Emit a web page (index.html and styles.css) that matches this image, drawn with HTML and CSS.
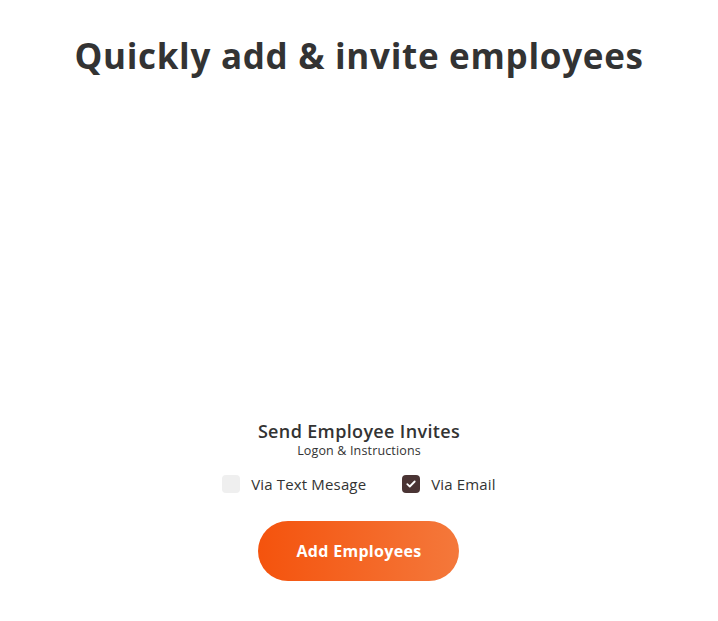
FILE: index.html
```html
<!DOCTYPE html>
<html>
<head>
<meta charset="utf-8">
<link rel="stylesheet" href="styles.css">
</head>
<body>
<main class="page">
  <h1 class="title">Quickly add &amp; invite employees</h1>
  <div class="spacer"></div>
  <section class="invites">
    <h2 class="invites-title">Send Employee Invites</h2>
    <p class="invites-sub">Logon &amp; Instructions</p>
    <div class="options">
      <label class="option">
        <span class="box"></span>
        <span class="option-label">Via Text Mesage</span>
      </label>
      <label class="option">
        <span class="box checked">
          <svg width="10" height="8" viewBox="0 0 10 8"><path d="M1.3 4.2 L3.8 6.5 L8.7 1.5" fill="none" stroke="#fff" stroke-width="1.8" stroke-linecap="round" stroke-linejoin="round"/></svg>
        </span>
        <span class="option-label">Via Email</span>
      </label>
    </div>
    <button class="add-btn">Add Employees</button>
  </section>
</main>
</body>
</html>
```
FILE: styles.css
```css
html, body {
  margin: 0;
  padding: 0;
  background: #fff;
}
body {
  font-family: "Open Sans", "Liberation Sans", sans-serif;
  color: #333;
}
.page {
  display: flex;
  flex-direction: column;
  align-items: center;
  width: 718px;
}
.title {
  margin: 34px 0 0;
  font-size: 35px;
  font-weight: 700;
  line-height: 44px;
  color: #333;
  letter-spacing: 0.7px;
}
.spacer {
  height: 342px;
}
.invites {
  display: flex;
  flex-direction: column;
  align-items: center;
}
.invites-title {
  margin: 0;
  font-size: 18px;
  font-weight: 600;
  line-height: 22px;
  color: #333;
  letter-spacing: 0.35px;
}
.invites-sub {
  margin: 0;
  font-size: 12.5px;
  line-height: 18px;
  color: #333;
  letter-spacing: 0.15px;
}
.options {
  display: flex;
  gap: 36px;
  margin-top: 14px;
}
.option {
  display: flex;
  align-items: center;
  gap: 11px;
}
.box {
  width: 18px;
  height: 18px;
  border-radius: 4px;
  background: #efefef;
  display: flex;
  align-items: center;
  justify-content: center;
}
.box.checked {
  background: #4a3434;
}
.option-label {
  font-size: 15px;
  line-height: 20px;
  color: #333;
  letter-spacing: 0.15px;
}
.add-btn {
  margin-top: 27px;
  width: 201px;
  height: 60px;
  border: 0;
  border-radius: 30px;
  background: linear-gradient(90deg, #f4530d 0%, #f4783b 100%);
  color: #fff;
  font-family: "Open Sans", "Liberation Sans", sans-serif;
  font-size: 16px;
  font-weight: 700;
  letter-spacing: 0.3px;
}
```
